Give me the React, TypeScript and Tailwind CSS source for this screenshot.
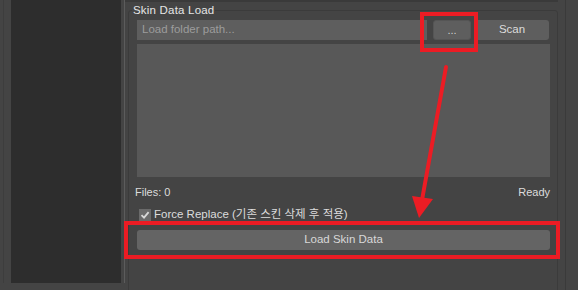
import React from "react";

export default function App() {
  const font = { fontFamily: '"Liberation Sans", "Noto Sans CJK KR", Arial, sans-serif' };
  return (
    <div
      className="relative flex w-[578px] h-[290px] bg-[#444444] overflow-hidden text-[11px] text-[#dcdcdc]"
      style={font}
    >
      {/* left strip */}
      <div className="w-[11px] h-[283px] flex">
        <div className="ml-[3px] w-px h-full bg-[#3d3d3d]" />
      </div>
      {/* dark side panel */}
      <div className="w-[110px] h-[283px] bg-[#2d2d2d]" />
      <div className="w-[3px]" />
      <div className="w-px h-[283px] bg-[#5c5c5c]" />
      {/* main */}
      <div className="flex flex-col w-[433px] border-t-2 border-[#3a3a3a]">
        <div className="pl-[3px] pt-[8px]">
          <div className="relative w-[430px] h-[300px] border border-[#3b3b3b] rounded-[3px] pl-[8px] pr-[7px] pt-[9px]">
            <div className="absolute left-[3px] top-[-8px] px-[1px] bg-[#444444] leading-[15px] text-[11.5px] tracking-[0.2px] text-[#e6e6e6]">
              Skin Data Load
            </div>
            {/* input row */}
            <div className="flex h-[20px]">
              <div className="w-[290px] h-full bg-[#5e5e5e] flex items-center pl-[5px] text-[#9c9c9c] text-[11.5px]">
                Load folder path...
              </div>
              <div className="w-[6px]" />
              <div className="w-[38px] h-full bg-[#5e5e5e] rounded-[3px] border border-[#555] flex items-center justify-center text-[#d0d0d0]">
                ...
              </div>
              <div className="w-[4px]" />
              <div className="w-[74px] h-full bg-[#5e5e5e] rounded-[3px] flex items-center justify-center text-[#dcdcdc] text-[11.5px]">
                Scan
              </div>
            </div>
            {/* list */}
            <div className="mt-[4px] h-[133px] bg-[#585858]" />
            {/* status row */}
            <div className="mt-[7px] h-[16px] flex items-center justify-between">
              <span className="ml-[-2px]">Files: 0</span>
              <span>Ready</span>
            </div>
            {/* checkbox row */}
            <div className="mt-[7px] h-[16px] flex items-center">
              <div className="ml-[2px] w-[12px] h-[12px] bg-[#6a6a6a] flex items-center justify-center">
                <svg width="10" height="10" viewBox="0 0 10 10">
                  <path d="M1.5 5.2 L4 7.6 L8.6 2.2" stroke="#d8d8d8" strokeWidth="1.8" fill="none" />
                </svg>
              </div>
              <span className="ml-[3px] text-[11.5px]">Force Replace (기존 스킨 삭제 후 적용)</span>
            </div>
            {/* load button */}
            <div className="mt-[7px] h-[20px] bg-[#646464] rounded-[3px] flex items-center justify-center text-[#d8d8d8] text-[11.5px]">
              Load Skin Data
            </div>
          </div>
        </div>
      </div>
      <div className="w-[7px]" />
      <div className="w-px h-full bg-[#3a3a3a]" />
      <div className="flex-1" />

      {/* annotations */}
      <div className="absolute left-[420px] top-[12px] w-[58px] h-[40px] border-4 border-[#ec1c24]" />
      <div className="absolute left-[124px] top-[221px] w-[436px] h-[38px] border-4 border-[#ec1c24]" />
      <svg className="absolute left-0 top-0" width="578" height="290" viewBox="0 0 578 290">
        <line x1="446" y1="67" x2="422" y2="200" stroke="#ec1c24" strokeWidth="4" strokeLinecap="round" />
        <polygon points="412,196 433,199 419,218" fill="#ec1c24" />
      </svg>
    </div>
  );
}
